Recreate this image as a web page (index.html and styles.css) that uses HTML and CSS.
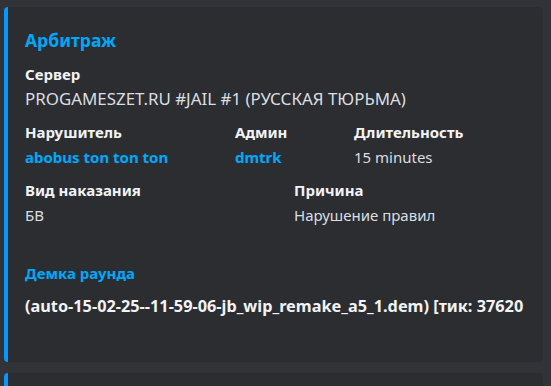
FILE: index.html
```html
<!DOCTYPE html>
<html lang="ru">
<head>
  <meta charset="UTF-8">
  <meta name="viewport" content="width=device-width, initial-scale=1.0">
  <title>Арбитраж</title>
  <link rel="stylesheet" href="styles.css">
</head>
<body>
  <!-- embed -->
  <div class="embed">
    <div class="embed-title">Арбитраж</div>

    <div class="field">
      <div class="field-name">Сервер</div>
      <div class="field-value caps">PROGAMESZET.RU #JAIL #1 (РУССКАЯ ТЮРЬМА)</div>
    </div>

    <div class="field-row row-3">
      <div class="field">
        <div class="field-name">Нарушитель</div>
        <div class="field-value link">abobus ton ton ton</div>
      </div>
      <div class="field">
        <div class="field-name">Админ</div>
        <div class="field-value link">dmtrk</div>
      </div>
      <div class="field">
        <div class="field-name">Длительность</div>
        <div class="field-value">15 minutes</div>
      </div>
    </div>

    <div class="field-row row-2">
      <div class="field">
        <div class="field-name">Вид наказания</div>
        <div class="field-value">БВ</div>
      </div>
      <div class="field">
        <div class="field-name">Причина</div>
        <div class="field-value">Нарушение правил</div>
      </div>
    </div>

    <!-- демка -->
    <div class="field demo">
      <div class="field-name link">Демка раунда</div>
      <div class="field-value strong">(auto-15-02-25--11-59-06-jb_wip_remake_a5_1.dem) [тик: 37620</div>
    </div>
  </div>

  <div class="embed next"></div>
</body>
</html>
```

FILE: styles.css
```css
*{
  margin: 0;
  padding: 0;
  box-sizing: border-box;
}

:root{
  --bg-page:#313338;
  --bg-embed:#2b2d31;
  --accent:#0a96ff;
  --link:#00a8fc;
  --text:#dbdee1;
  --text-strong:#f2f3f5;
}

body{
  background-color: var(--bg-page);
  padding: 7px 8px 0 4px;
  font-family: "Noto Sans", "Open Sans", sans-serif;
  color: var(--text);
  overflow: hidden;
}

/* embed */
.embed{
  width: 539px;
  background-color: var(--bg-embed);
  border-left: 4px solid var(--accent);
  border-radius: 4px;
  padding: 21px 16px 45px 17px;
  display: flex;
  flex-direction: column;
  gap: 11px;
}

.embed.next{
  margin-top: 11px;
  height: 40px;
}

.embed-title{
  font-size: 17.5px;
  line-height: 24px;
  font-weight: 700;
  color: var(--link);
}

/* campos */
.field{
  display: flex;
  flex-direction: column;
  gap: 3px;
}

.field-name{
  font-size: 15px;
  line-height: 22px;
  font-weight: 700;
  color: var(--text-strong);
}

.field-value{
  font-size: 15px;
  line-height: 22px;
  white-space: nowrap;
}

/* mayusculas mas grandes */
.field-value.caps{
  font-size: 16.9px;
}

.field-row{
  display: grid;
}

.row-3{
  grid-template-columns: 210px 119px auto;
}

.row-2{
  grid-template-columns: 269px auto;
}

.link{
  color: var(--link);
  font-weight: 700;
}

.field-value.strong{
  font-size: 16.3px;
  font-weight: 700;
  color: var(--text-strong);
}

.demo{
  margin-top: 25px;
  gap: 11px;
}
```
